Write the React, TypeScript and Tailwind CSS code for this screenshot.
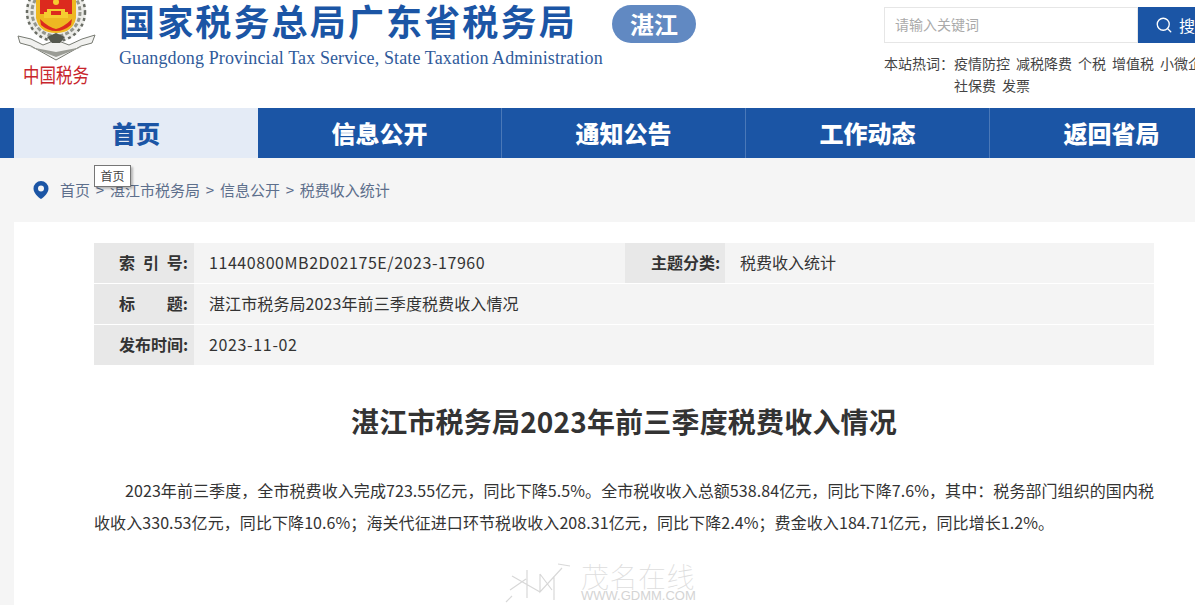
import React from "react";
import { Search } from "lucide-react";

const cjk = "font-['Microsoft_YaHei','Noto_Sans_CJK_SC',sans-serif]";

const navItems = ["信息公开", "通知公告", "工作动态", "返回省局"];
const hotWords = ["疫情防控", "减税降费", "个税", "增值税", "小微企业", "社保费", "发票"];

const Emblem: React.FC = () => (
  <svg viewBox="0 0 80 62" className="block h-[62px] w-[80px]">
    {/* wreath */}
    <circle cx="39" cy="12" r="30" fill="#ecece8" />
    <circle cx="39" cy="12" r="29" fill="none" stroke="#6a6d65" strokeWidth="2.500" strokeDasharray="3 3" />
    <circle cx="39" cy="12" r="24" fill="none" stroke="#94968e" strokeWidth="3" strokeDasharray="4 2" />
    {/* shield */}
    <path d="M19 -2H59V18Q56 33 39 33Q22 33 19 18Z" fill="#eeb822" />
    <path d="M23 -2H55V14H23Z" fill="#dc2a1e" />
    <path d="M23 19Q31 27 39 29Q47 27 55 19L54 25Q47 31 39 31Q31 31 24 25Z" fill="#dc2a1e" />
    <circle cx="39" cy="2" r="3" fill="#f5cc30" />
    <path d="M30 9H48V12H51V18H27V12H30Z" fill="#f5cc30" />
    <path d="M34 11H44V15H34Z" fill="#dc2a1e" />
    {/* ribbon */}
    <path d="M1 36L14 39L26 45L39 40L52 45L65 39L78 35L75 43L64 46L39 60L14 46L3 43Z" fill="#f1f1ef" stroke="#777a72" strokeWidth="1" />
    <path d="M13 47L39 57L65 47L39 52Z" fill="#9a9c95" />
    <path d="M30 37L39 33L48 37L43 43H35Z" fill="#55584f" />
  </svg>
);

const Watermark: React.FC = () => (
  <div className="pointer-events-none absolute left-[502px] top-[562px] flex h-[42px] w-[200px] items-start">
    <svg viewBox="0 0 70 42" className="h-[42px] w-[70px] shrink-0" fill="none" stroke="#d8d8d8" strokeWidth="1.200">
      <path d="M10 14L38 30M25 8V36M4 40L10 34M8 28L24 17M38 12V30L60 6M38 12L50 28M52 14V38M56 2L68 4" />
    </svg>
    <div className="ml-[9px] flex flex-col items-start leading-none">
      <span className="text-[28px] leading-[28px] font-thin tracking-[0.5px] whitespace-nowrap text-[#dddddd]">茂名在线</span>
      <span className="font-['Liberation_Sans',sans-serif] text-[13px] leading-[11px] whitespace-nowrap text-[#d4d4d4]">WWW.GDMM.COM</span>
    </div>
  </div>
);

const Spread: React.FC<{ chars: string[] }> = ({ chars }) => (
  <span className="flex w-[69px] justify-between">
    {chars.map((c) => (
      <span key={c}>{c}</span>
    ))}
  </span>
);

const MetaRow: React.FC<{ label: React.ReactNode; value: string; valueClass: string; label2?: string; value2?: string }> = ({
  label,
  value,
  valueClass,
  label2,
  value2,
}) => (
  <div className="flex h-[40px] bg-[#f4f4f4] text-[16px] leading-[38px] text-[#333333]">
    <div className="flex w-[100px] shrink-0 bg-[#e8e8e8] pl-[25px] font-bold">{label}</div>
    <div className={`ml-[2px] flex-1 pl-[13px] whitespace-nowrap ${valueClass}`}>{value}</div>
    {label2 && (
      <>
        <div className="w-[100px] shrink-0 bg-[#e8e8e8] pl-[26px] font-bold">{label2}</div>
        <div className="w-[429px] shrink-0 pl-[15px]">{value2}</div>
      </>
    )}
  </div>
);

export default function App() {
  return (
    <div className={`${cjk} relative h-[605px] w-[1195px] overflow-hidden bg-white`}>
      {/* header */}
      <header className="flex h-[108px]">
        <div className="ml-[17px] flex w-[102px] shrink-0 flex-col">
          <Emblem />
          <div className="ml-[6px] origin-top scale-y-125 text-[16.500px] leading-[20px] whitespace-nowrap text-[#c8252c]">中国税务</div>
        </div>
        <div className="w-[493px] shrink-0">
          <h1 className="mt-[-5px] text-[36px] leading-[50px] font-bold tracking-[2.150px] whitespace-nowrap text-[#1b55a5]">国家税务总局广东省税务局</h1>
          <p className="mt-[3px] font-['Liberation_Serif',serif] text-[18px] leading-[20px] tracking-[0.12px] whitespace-nowrap text-[#2f5a9a]">
            Guangdong Provincial Tax Service, State Taxation Administration
          </p>
        </div>
        <div className="mt-[5px] flex h-[38px] w-[84px] shrink-0 items-center justify-center rounded-[19px] bg-[#6189c2] text-[24px] font-bold text-white">湛江</div>
        <div className="ml-[188px] w-[340px] shrink-0 pt-[7px]">
          <div className="flex h-[36px]">
            <div className="flex w-[254px] items-center border border-[#e6e6e6] pb-[1px] pl-[10px] text-[14px] text-[#aaaaaa]">请输入关键词</div>
            <div className="flex w-[66px] items-center bg-[#1b55a5] pl-[17px] text-[16px] whitespace-nowrap text-white">
              <Search size={18} strokeWidth={1.800} className="mr-[6px] shrink-0" />
              搜索
            </div>
          </div>
          <div className="mt-[9px] flex text-[14px] leading-[22px] text-[#444444]">
            <span className="w-[70px] shrink-0 whitespace-nowrap">本站热词：</span>
            <div className="flex w-[270px] flex-wrap gap-x-[6px]">
              {hotWords.map((w) => (
                <span key={w} className="whitespace-nowrap">{w}</span>
              ))}
            </div>
          </div>
        </div>
      </header>

      {/* nav */}
      <nav className="flex h-[50px] w-[1240px] bg-[#1b55a5] pl-[14px] text-[24px] leading-[50px] font-extrabold">
        <div className="w-[244px] bg-[#e4ebf6] text-center text-[#1b55a5]">首页</div>
        {navItems.map((item, i) => (
          <div key={item} className={`text-center text-white ${i > 0 ? "w-[244px] border-l border-[#4a78b8]" : "w-[243px]"}`}>
            {item}
          </div>
        ))}
      </nav>

      <main className="h-[447px] bg-[#f5f5f5] pl-[14px]">
        {/* breadcrumb */}
        <div className="flex h-[64px] items-center pl-[19px] text-[15px] text-[#5d6f8c]">
          <svg viewBox="0 0 16 18" className="mr-[11px] h-[18px] w-[16px] shrink-0">
            <path fillRule="evenodd" d="M8 0a7.500 7.500 0 0 1 7.500 7.500C15.500 12 11 16 8 18 5 16 .5 12 .5 7.500A7.500 7.500 0 0 1 8 0Zm0 4.500a3 3 0 1 0 0 6 3 3 0 0 0 0-6Z" fill="#1b55a5" />
          </svg>
          <span>首页</span>
          <span className="mx-[5.800px]">&gt;</span>
          <span>湛江市税务局</span>
          <span className="mx-[5.800px]">&gt;</span>
          <span>信息公开</span>
          <span className="mx-[5.800px]">&gt;</span>
          <span>税费收入统计</span>
        </div>

        {/* article */}
        <article className="h-[383px] bg-white pl-[80px] pr-[41px] pt-[21px]">
          <div className="flex flex-col gap-[1px]">
            <MetaRow
              label={<Spread chars={["索", "引", "号:"]} />}
              value="11440800MB2D02175E/2023-17960"
              valueClass="tracking-[0.560px]"
              label2="主题分类:"
              value2="税费收入统计"
            />
            <MetaRow label={<Spread chars={["标", "题:"]} />} value="湛江市税务局2023年前三季度税费收入情况" valueClass="tracking-[0.100px]" />
            <MetaRow label="发布时间:" value="2023-11-02" valueClass="tracking-[0.650px]" />
          </div>
          <h2 className="mt-[36px] text-center text-[28px] leading-[40px] font-bold tracking-[0.180px] text-[#333333]">
            湛江市税务局2023年前三季度税费收入情况
          </h2>
          <p className="mr-[-3px] mt-[33px] indent-[31px] text-[16px] leading-[32px] tracking-[0.080px] text-[#333333]">
            2023年前三季度，全市税费收入完成723.55亿元，同比下降5.5%。全市税收收入总额538.84亿元，同比下降7.6%，其中：税务部门组织的国内税收收入330.53亿元，同比下降10.6%；海关代征进口环节税收收入208.31亿元，同比下降2.4%；费金收入184.71亿元，同比增长1.2%。
          </p>
        </article>
      </main>

      {/* browser tooltip */}
      <div className="absolute left-[94px] top-[165px] flex h-[22px] w-[37px] items-center justify-center border border-[#767676] bg-white text-[12px] text-[#444444] shadow-[2px_2px_2px_rgba(0,0,0,0.25)]">
        首页
      </div>
      <Watermark />
    </div>
  );
}
